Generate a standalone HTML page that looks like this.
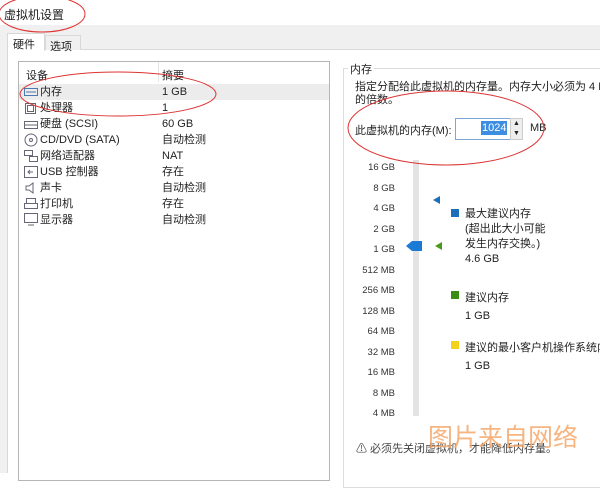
<!DOCTYPE html>
<html><head><meta charset="utf-8"><style>
*{margin:0;padding:0;box-sizing:border-box}
body{width:600px;height:473px;overflow:hidden;background:#fff;font-family:"Liberation Sans","Noto Sans CJK SC",sans-serif;font-size:11px;color:#222;position:relative}
.a{position:absolute;white-space:nowrap}
</style></head><body>
<div class="a" style="left:0;top:25px;width:600px;height:448px;background:#f0f0f0"></div>
<div class="a" style="left:7px;top:49px;width:593px;height:424px;background:#fff;border-left:1px solid #d9d9d9;border-top:1px solid #d9d9d9"></div>
<div class="a" style="left:7px;top:33px;width:38px;height:18px;background:#fff;border:1px solid #d9d9d9;border-bottom:none"></div>
<div class="a" style="left:45px;top:35px;width:36px;height:15px;background:#f0f0f0;border:1px solid #d9d9d9;border-bottom:none"></div>
<div class="a" style="left:4px;top:6px;font-size:12px">虚拟机设置</div>
<div class="a" style="left:13px;top:36px">硬件</div>
<div class="a" style="left:50px;top:38px">选项</div>
<div class="a" style="left:18px;top:61px;width:312px;height:420px;border:1px solid #b5b5b5;background:#fff"></div>
<div class="a" style="left:19px;top:84px;width:310px;height:16px;background:#ececec"></div>
<div class="a" style="left:158px;top:62px;width:1px;height:20px;background:#e5e5e5"></div>
<div class="a" style="left:26px;top:68px;line-height:16px">设备</div>
<div class="a" style="left:40px;top:84px;line-height:16px">内存<br>处理器<br>硬盘 (SCSI)<br>CD/DVD (SATA)<br>网络适配器<br>USB 控制器<br>声卡<br>打印机<br>显示器</div>
<div class="a" style="left:162px;top:68px;line-height:16px">摘要<br>1 GB<br>1<br>60 GB<br>自动检测<br>NAT<br>存在<br>自动检测<br>存在<br>自动检测</div>
<svg class="a" style="left:23px;top:84px" width="16" height="144" fill="none" stroke="#667" stroke-width="1">
<rect x="1.5" y="4.5" width="13" height="7" stroke="#4a7ab0"/><line x1="3" y1="8" x2="13" y2="8" stroke="#4a7ab0"/>
<rect x="2.5" y="19.5" width="10" height="10"/><rect x="4.5" y="21.5" width="6" height="6"/>
<rect x="1.5" y="37.5" width="13" height="7"/><line x1="2" y1="41" x2="14" y2="41"/>
<circle cx="8" cy="56" r="6"/><circle cx="8" cy="56" r="1.5"/>
<rect x="1.5" y="66.5" width="8" height="5"/><rect x="6.5" y="72.5" width="8" height="5"/>
<rect x="1.5" y="82.5" width="13" height="11"/><path d="M10 88 H5 M7 86 L5 88 L7 90"/>
<path d="M3 102 H6 L10 99 V109 L6 106 H3 Z"/>
<rect x="3.5" y="114.5" width="9" height="5"/><rect x="1.5" y="119.5" width="13" height="5"/>
<rect x="1.5" y="129.5" width="13" height="9"/><line x1="5" y1="141" x2="11" y2="141"/>
</svg>
<div class="a" style="left:343px;top:68px;width:270px;height:420px;border:1px solid #dcdcdc"></div>
<div class="a" style="left:348px;top:61px;background:#fff;padding:0 2px">内存</div>
<div class="a" style="left:355px;top:81px;line-height:13px">指定分配给此虚拟机的内存量。内存大小必须为 4 MB<br>的倍数。</div>
<div class="a" style="left:355px;top:122px">此虚拟机的内存(M):</div>
<div class="a" style="left:455px;top:118px;width:56px;height:22px;border:1px solid #7aa7d6;background:#fff"></div>
<div class="a" style="left:481px;top:121px;background:#3d8ee0;color:#fff;padding:0 1px;line-height:14px">1024</div>
<div class="a" style="left:510px;top:118px;width:13px;height:22px;background:#eee;border:1px solid #ccc;font-size:7px;line-height:10px;text-align:center">▲<br>▼</div>
<div class="a" style="left:530px;top:122px">MB</div>
<div class="a" style="left:340px;top:158px;width:55px;text-align:right;line-height:20.5px;font-size:9.5px;color:#333">16 GB<br>8 GB<br>4 GB<br>2 GB<br>1 GB<br>512 MB<br>256 MB<br>128 MB<br>64 MB<br>32 MB<br>16 MB<br>8 MB<br>4 MB</div>
<div class="a" style="left:413px;top:160px;width:6px;height:256px;background:#e3e3e3"></div>
<svg class="a" style="left:400px;top:150px" width="50" height="110"><path d="M6 96 L12 91 H22 V101 H12 Z" fill="#1a7ad4"/><path d="M33 50 L40 46 V54Z" fill="#1a6fb8"/><path d="M35 96 L42 92 V100Z" fill="#4a9a1a"/></svg>
<div class="a" style="left:451px;top:209px;width:8px;height:8px;background:#1a6fb8"></div>
<div class="a" style="left:465px;top:207px;line-height:15px">最大建议内存<br>(超出此大小可能<br>发生内存交换。)<br>4.6 GB</div>
<div class="a" style="left:451px;top:291px;width:8px;height:8px;background:#3a8c12"></div>
<div class="a" style="left:465px;top:289px;line-height:18px">建议内存<br>1 GB</div>
<div class="a" style="left:451px;top:341px;width:8px;height:8px;background:#f2d21a"></div>
<div class="a" style="left:465px;top:339px;line-height:18px">建议的最小客户机操作系统内<br>1 GB</div>
<div class="a" style="left:356px;top:440px;color:#444">⚠ 必须先关闭虚拟机，才能降低内存量。</div>
<div class="a" style="left:428px;top:418px;font-size:25px;color:#f5a86a;font-family:'Noto Sans CJK SC',sans-serif;opacity:.85">图片来自网络</div>
<svg class="a" style="left:0;top:0" width="600" height="473" fill="none" stroke="#d33" stroke-width="1">
<ellipse cx="42" cy="14" rx="43" ry="18"/>
<ellipse cx="118" cy="94" rx="98" ry="22"/>
<ellipse cx="446" cy="128" rx="98" ry="37"/>
</svg>
</body></html>
